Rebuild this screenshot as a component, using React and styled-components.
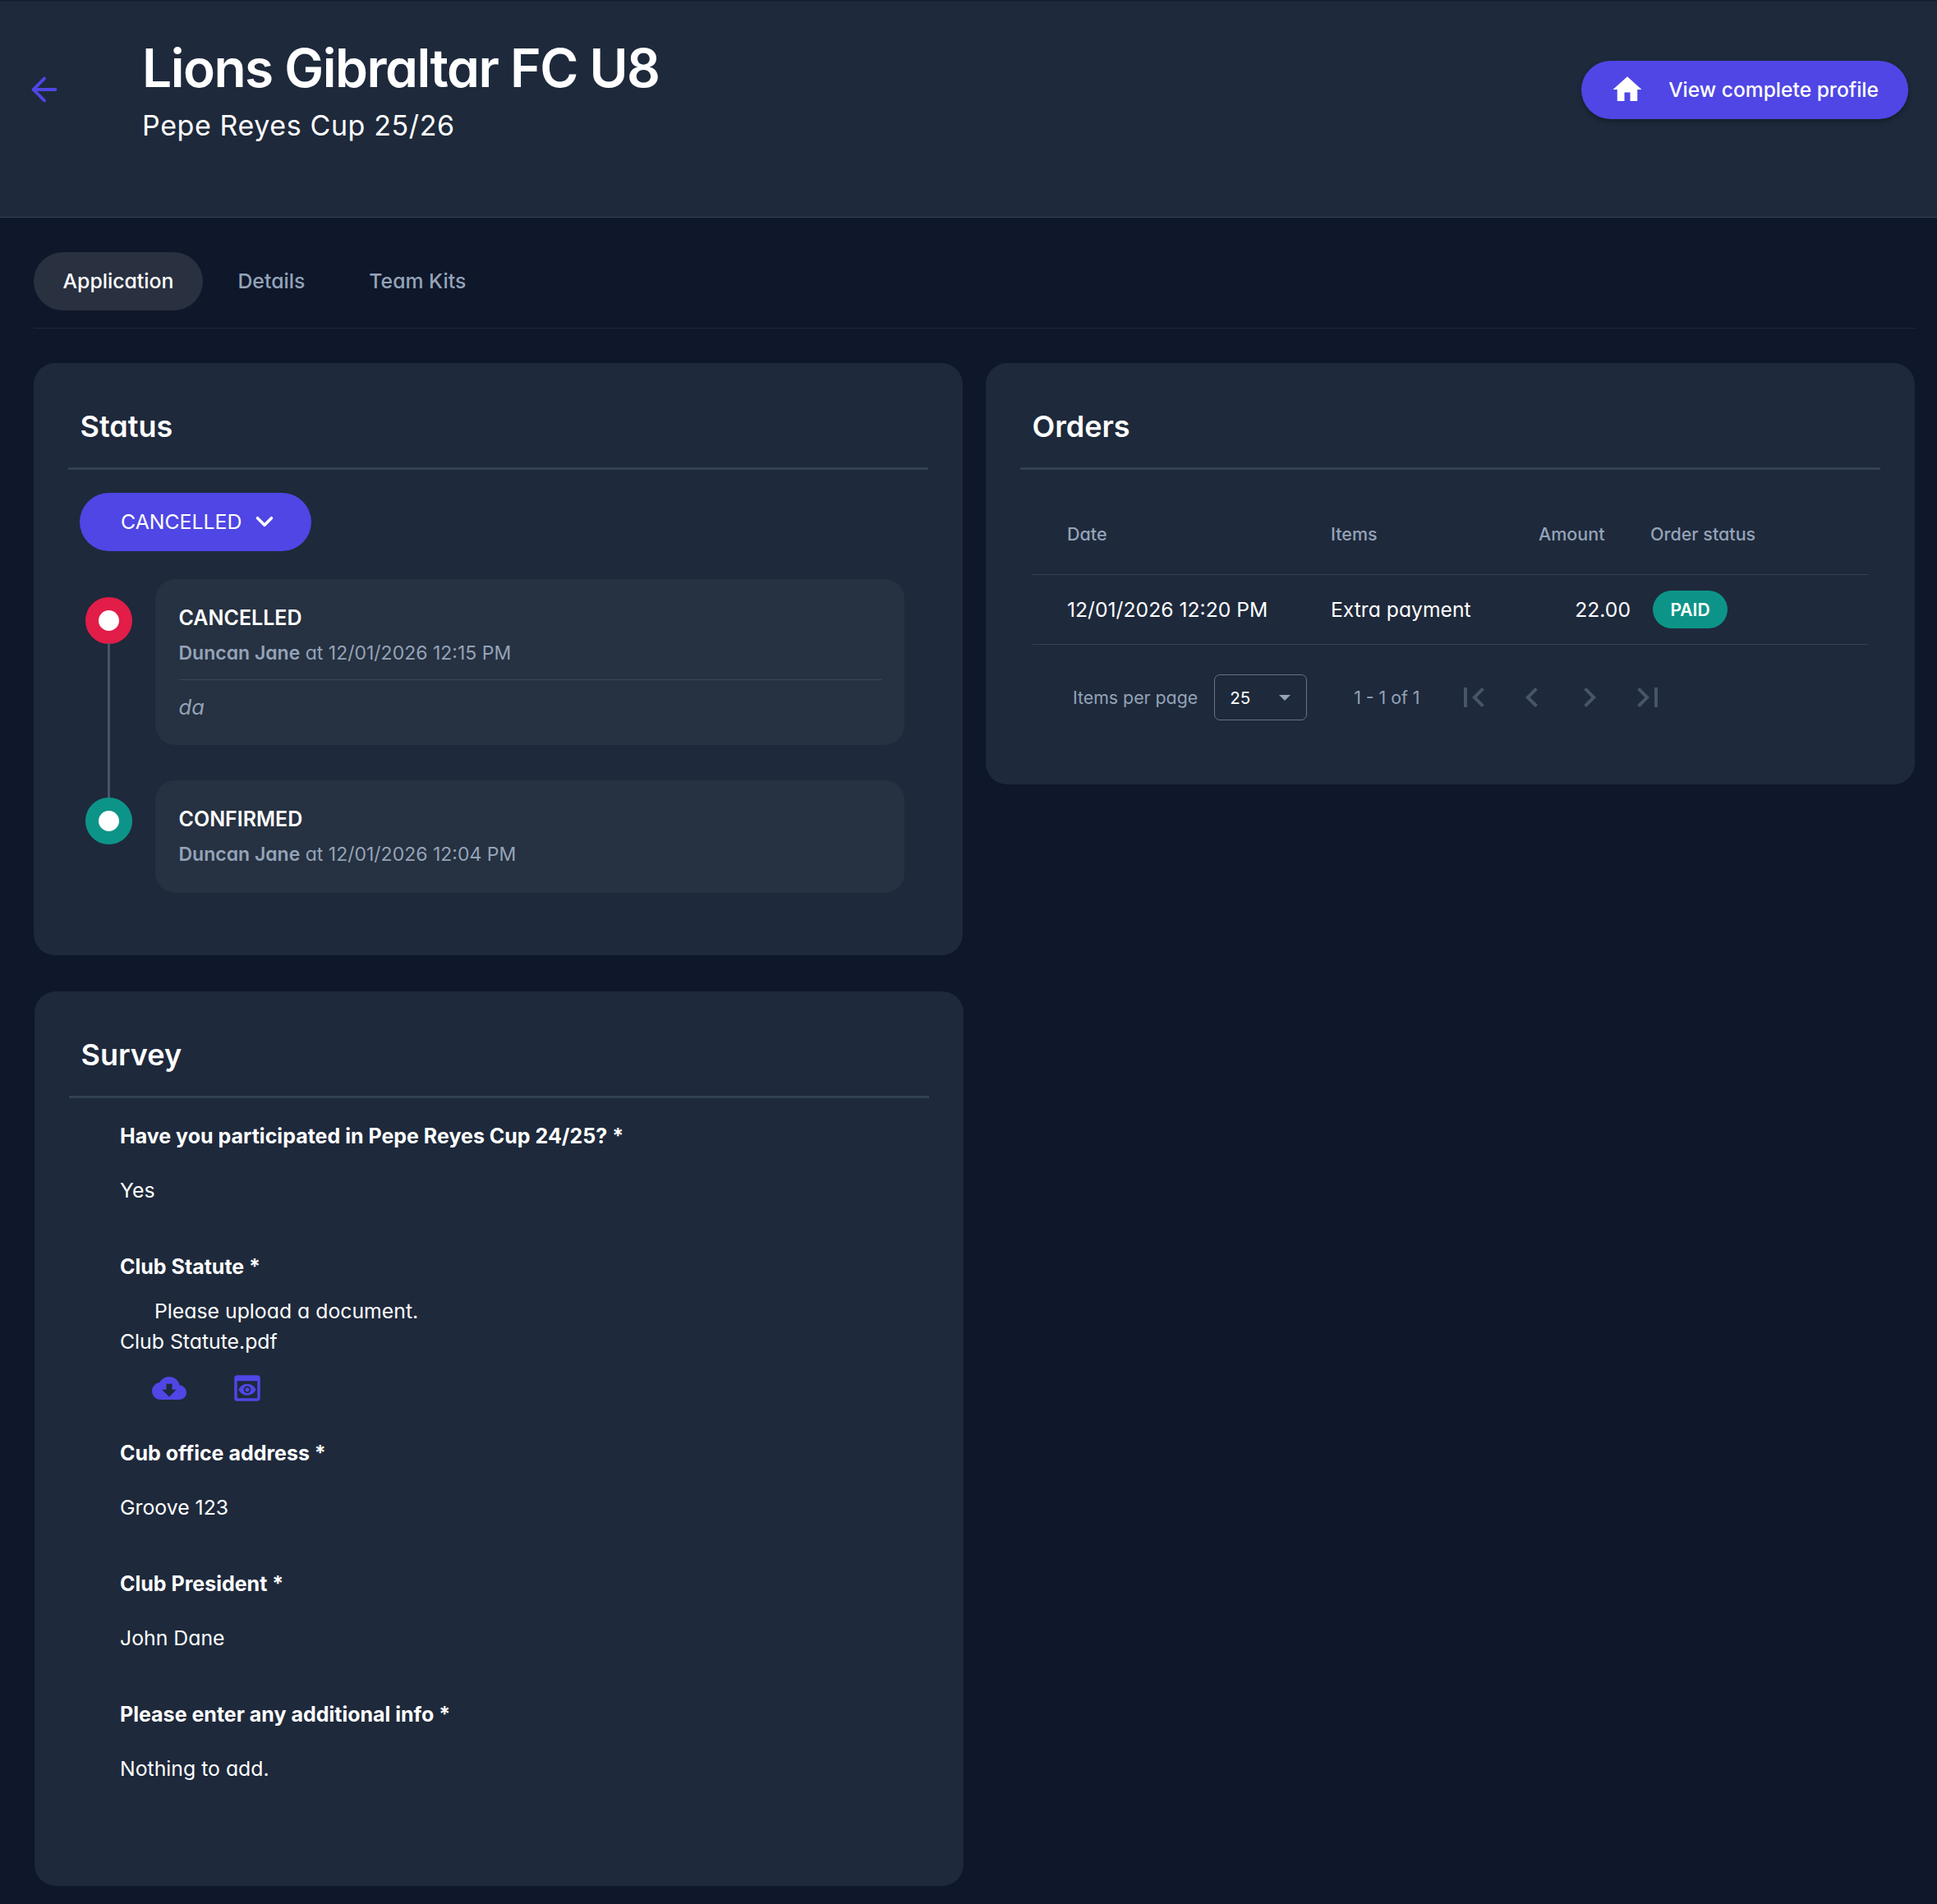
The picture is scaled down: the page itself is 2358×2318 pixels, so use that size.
import React from "react";
import styled, { createGlobalStyle } from "styled-components";
import { ArrowLeft, ChevronDown } from "lucide-react";
import {
  MdHome,
  MdCloudDownload,
  MdPreview,
  MdFirstPage,
  MdLastPage,
  MdChevronLeft,
  MdChevronRight,
} from "react-icons/md";

const GlobalStyle = createGlobalStyle`
  html, body {
    margin: 0;
    background: #0f172a;
    color: #fff;
    font-family: Inter, "Noto Sans", sans-serif;
    font-feature-settings: "cv11" 1;
  }
  * { box-sizing: border-box; }
`;

const Page = styled.div`
  width: 2358px;
  height: 2318px;
  overflow: hidden;
`;

const Header = styled.header`
  height: 265px;
  background: #1e293b;
  border-top: 2px solid #172033;
  border-bottom: 1px solid #334155;
  padding: 0 35px 0 31px;
  display: flex;
  align-items: flex-start;
`;

const BackLink = styled.a`
  display: flex;
  color: #4f46e5;
  margin-top: 84px;
  width: 142px;
`;

const Titles = styled.div`
  flex: 1;
  padding-top: 42px;
`;

const Title = styled.h1`
  margin: 0;
  font-size: 64px;
  line-height: 78px;
  font-weight: 600;
  letter-spacing: -1.5px;
`;

const Subtitle = styled.div`
  font-size: 34px;
  line-height: 44px;
  margin-top: 9px;
  letter-spacing: 0.6px;
`;

const ProfileButton = styled.button`
  margin-top: 72px;
  height: 71px;
  width: 398px;
  padding: 0 36px 2px 35px;
  border: 0;
  border-radius: 36px;
  background: #4f46e5;
  color: #fff;
  font: 500 24.6px Inter, sans-serif;
  font-feature-settings: normal;
  display: flex;
  align-items: center;
  justify-content: space-between;
  box-shadow: 0 3px 6px rgba(0, 0, 0, 0.3);
`;

const Main = styled.main`
  padding: 42px 27px 0 41px;
`;

const Tabs = styled.nav`
  display: flex;
  padding-bottom: 21px;
  border-bottom: 1px solid #1e293b;
`;

const Tab = styled.a`
  height: 71px;
  padding: 0 35.5px 2px;
  margin-right: 7px;
  border-radius: 36px;
  display: flex;
  align-items: center;
  font-size: 24.8px;
  font-weight: 500;
  color: ${(p) => (p.$active ? "#fff" : "#94a3b8")};
  background: ${(p) => (p.$active ? "#293040" : "transparent")};
`;

const Columns = styled.div`
  display: grid;
  grid-template-columns: 1131px 1131px;
  column-gap: 28px;
  align-items: start;
  margin-top: 42px;
`;

const LeftColumn = styled.div`
  display: flex;
  flex-direction: column;
  gap: 44px;
`;

const Card = styled.section`
  width: 1131px;
  background: #1e293b;
  border-radius: 26px;
  padding: 55px 42px 0;
  height: ${(p) => p.$height}px;
  margin-left: ${(p) => p.$shift || 0}px;
`;

const CardTitle = styled.h2`
  margin: 0;
  padding: 0 0 28px 14.5px;
  font-size: 36px;
  line-height: 44px;
  font-weight: 600;
  border-bottom: 3px solid #334155;
`;

const StatusButton = styled.button`
  margin: 27.5px 0 0 14px;
  height: 71px;
  width: 282px;
  padding: 0 0 0 50px;
  border: 0;
  border-radius: 36px;
  background: #4f46e5;
  color: #fff;
  font: 400 24.8px Inter, sans-serif;
  font-feature-settings: "cv11" 1;
  display: flex;
  align-items: center;
  gap: 10.5px;
`;

const Timeline = styled.div`
  margin: 34.5px 0 0 21px;
  display: flex;
  flex-direction: column;
  gap: 43px;
`;

const Event = styled.div`
  position: relative;
  display: flex;
  gap: 28px;
`;

const Dot = styled.span`
  flex: none;
  width: 57px;
  height: 57px;
  margin-top: ${(p) => p.$offset}px;
  border-radius: 50%;
  border: 16.5px solid ${(p) => p.$color};
  background: #fff;
`;

const Connector = styled.span`
  position: absolute;
  left: 27px;
  top: 78px;
  width: 3px;
  height: 189px;
  background: #475569;
`;

const EventCard = styled.div`
  width: 912px;
  background: #263141;
  border-radius: 24px;
  padding: 31px 28.5px 0;
  height: ${(p) => p.$height}px;
`;

const EventTitle = styled.div`
  font-size: 25px;
  line-height: 32px;
  font-weight: 600;
`;

const EventMeta = styled.div`
  margin-top: 11px;
  font-size: 23px;
  line-height: 32px;
  color: #94a3b8;
  b {
    font-weight: 600;
    font-feature-settings: "cv11" 1;
  }
`;

const EventNote = styled.div`
  margin-top: 16px;
  padding-top: 17px;
  border-top: 1px solid #3b4657;
  font-size: 25.5px;
  line-height: 32px;
  font-style: italic;
  color: #94a3b8;
`;

const OrderRow = styled.div`
  display: grid;
  grid-template-columns: 321px 253px 136px 1fr;
  align-items: center;
  height: ${(p) => p.$height}px;
  margin: 0 15px;
  padding: ${(p) => p.$top || 0}px 0 0 42px;
  border-bottom: 1px solid #334155;
`;

const OrderHead = styled.span`
  font-size: 21.5px;
  font-weight: 500;
  color: #94a3b8;
`;

const OrderCell = styled.span`
  font-size: 24.7px;
  text-align: ${(p) => p.$align || "left"};
  padding-right: ${(p) => (p.$align ? "24px" : 0)};
`;

const PaidBadge = styled.span`
  justify-self: start;
  margin-left: 3px;
  width: 91px;
  height: 46px;
  border-radius: 23px;
  background: #0d9488;
  display: flex;
  align-items: center;
  justify-content: center;
  font-size: 21px;
  font-weight: 600;
`;

const Paginator = styled.div`
  display: flex;
  align-items: center;
  margin: 36px 0 0 64px;
  font-size: 21.3px;
  color: #94a3b8;
`;

const PageSelect = styled.div`
  width: 113px;
  height: 56px;
  margin: 0 57px 0 20px;
  padding: 0 19px 0 18px;
  border: 1px solid #64748b;
  border-radius: 7px;
  display: flex;
  align-items: center;
  justify-content: space-between;
  font-size: 20.5px;
  color: #fff;
`;

const SelectCaret = styled.span`
  width: 0;
  height: 0;
  border-left: 7.5px solid transparent;
  border-right: 7.5px solid transparent;
  border-top: 7.5px solid #94a3b8;
`;

const PageIcons = styled.div`
  display: flex;
  gap: 22.5px;
  margin-left: 41.5px;
  color: #475569;
  font-size: 48px;
  line-height: 0;
`;

const Survey = styled.div`
  padding: 29px 0 0 62px;
`;

const Question = styled.div`
  margin-bottom: ${(p) => (p.$tight ? "20px" : "32px")};
  font-size: 25px;
  line-height: 34px;
  font-weight: 700;
  font-feature-settings: normal;
`;

const Answer = styled.div`
  font-size: 24.8px;
  line-height: 34px;
  margin-bottom: 59px;
`;

const Hint = styled.div`
  font-size: 24.8px;
  line-height: 34px;
  padding-left: 42px;
  margin-bottom: 2.5px;
`;

const FileName = styled.div`
  font-size: 24.8px;
  line-height: 34px;
`;

const FileActions = styled.div`
  display: flex;
  align-items: center;
  gap: 53px;
  margin: 19.5px 0 40.5px 39px;
  color: #4f46e5;
  line-height: 0;
`;

const questions = [
  { q: "Cub office address *", a: "Groove 123" },
  { q: "Club President *", a: "John Dane" },
  { q: "Please enter any additional info *", a: "Nothing to add." },
];

export default function App() {
  return (
    <Page>
      <GlobalStyle />
      <Header>
        <BackLink>
          <ArrowLeft size={46} strokeWidth={2} />
        </BackLink>
        <Titles>
          <Title>Lions Gibraltar FC U8</Title>
          <Subtitle>Pepe Reyes Cup 25/26</Subtitle>
        </Titles>
        <ProfileButton>
          <MdHome size={42} />
          View complete profile
        </ProfileButton>
      </Header>
      <Main>
        <Tabs>
          <Tab $active>Application</Tab>
          <Tab>Details</Tab>
          <Tab>Team Kits</Tab>
        </Tabs>
        <Columns>
          <LeftColumn>
            <Card $height={721}>
              <CardTitle>Status</CardTitle>
              <StatusButton>
                CANCELLED
                <ChevronDown size={34} strokeWidth={2.5} />
              </StatusButton>
              <Timeline>
                <Event>
                  <Dot $color="#e11d48" $offset={22} />
                  <Connector />
                  <EventCard $height={202}>
                    <EventTitle>CANCELLED</EventTitle>
                    <EventMeta>
                      <b>Duncan Jane</b> at 12/01/2026 12:15 PM
                    </EventMeta>
                    <EventNote>da</EventNote>
                  </EventCard>
                </Event>
                <Event>
                  <Dot $color="#0d9488" $offset={21} />
                  <EventCard $height={137}>
                    <EventTitle>CONFIRMED</EventTitle>
                    <EventMeta>
                      <b>Duncan Jane</b> at 12/01/2026 12:04 PM
                    </EventMeta>
                  </EventCard>
                </Event>
              </Timeline>
            </Card>
            <Card $height={1089} $shift={1}>
              <CardTitle>Survey</CardTitle>
              <Survey>
                <Question>Have you participated in Pepe Reyes Cup 24/25? *</Question>
                <Answer>Yes</Answer>
                <Question $tight>Club Statute *</Question>
                <Hint>Please upload a document.</Hint>
                <FileName>Club Statute.pdf</FileName>
                <FileActions>
                  <MdCloudDownload size={42} />
                  <MdPreview size={42} />
                </FileActions>
                {questions.map((item) => (
                  <React.Fragment key={item.q}>
                    <Question>{item.q}</Question>
                    <Answer>{item.a}</Answer>
                  </React.Fragment>
                ))}
              </Survey>
            </Card>
          </LeftColumn>
          <Card $height={513}>
            <CardTitle>Orders</CardTitle>
            <OrderRow $height={128} $top={28}>
              <OrderHead>Date</OrderHead>
              <OrderHead>Items</OrderHead>
              <OrderHead>Amount</OrderHead>
              <OrderHead>Order status</OrderHead>
            </OrderRow>
            <OrderRow $height={85}>
              <OrderCell>12/01/2026 12:20 PM</OrderCell>
              <OrderCell>Extra payment</OrderCell>
              <OrderCell $align="right">22.00</OrderCell>
              <PaidBadge>PAID</PaidBadge>
            </OrderRow>
            <Paginator>
              Items per page
              <PageSelect>
                25
                <SelectCaret />
              </PageSelect>
              1 - 1 of 1
              <PageIcons>
                <MdFirstPage />
                <MdChevronLeft />
                <MdChevronRight />
                <MdLastPage />
              </PageIcons>
            </Paginator>
          </Card>
        </Columns>
      </Main>
    </Page>
  );
}
